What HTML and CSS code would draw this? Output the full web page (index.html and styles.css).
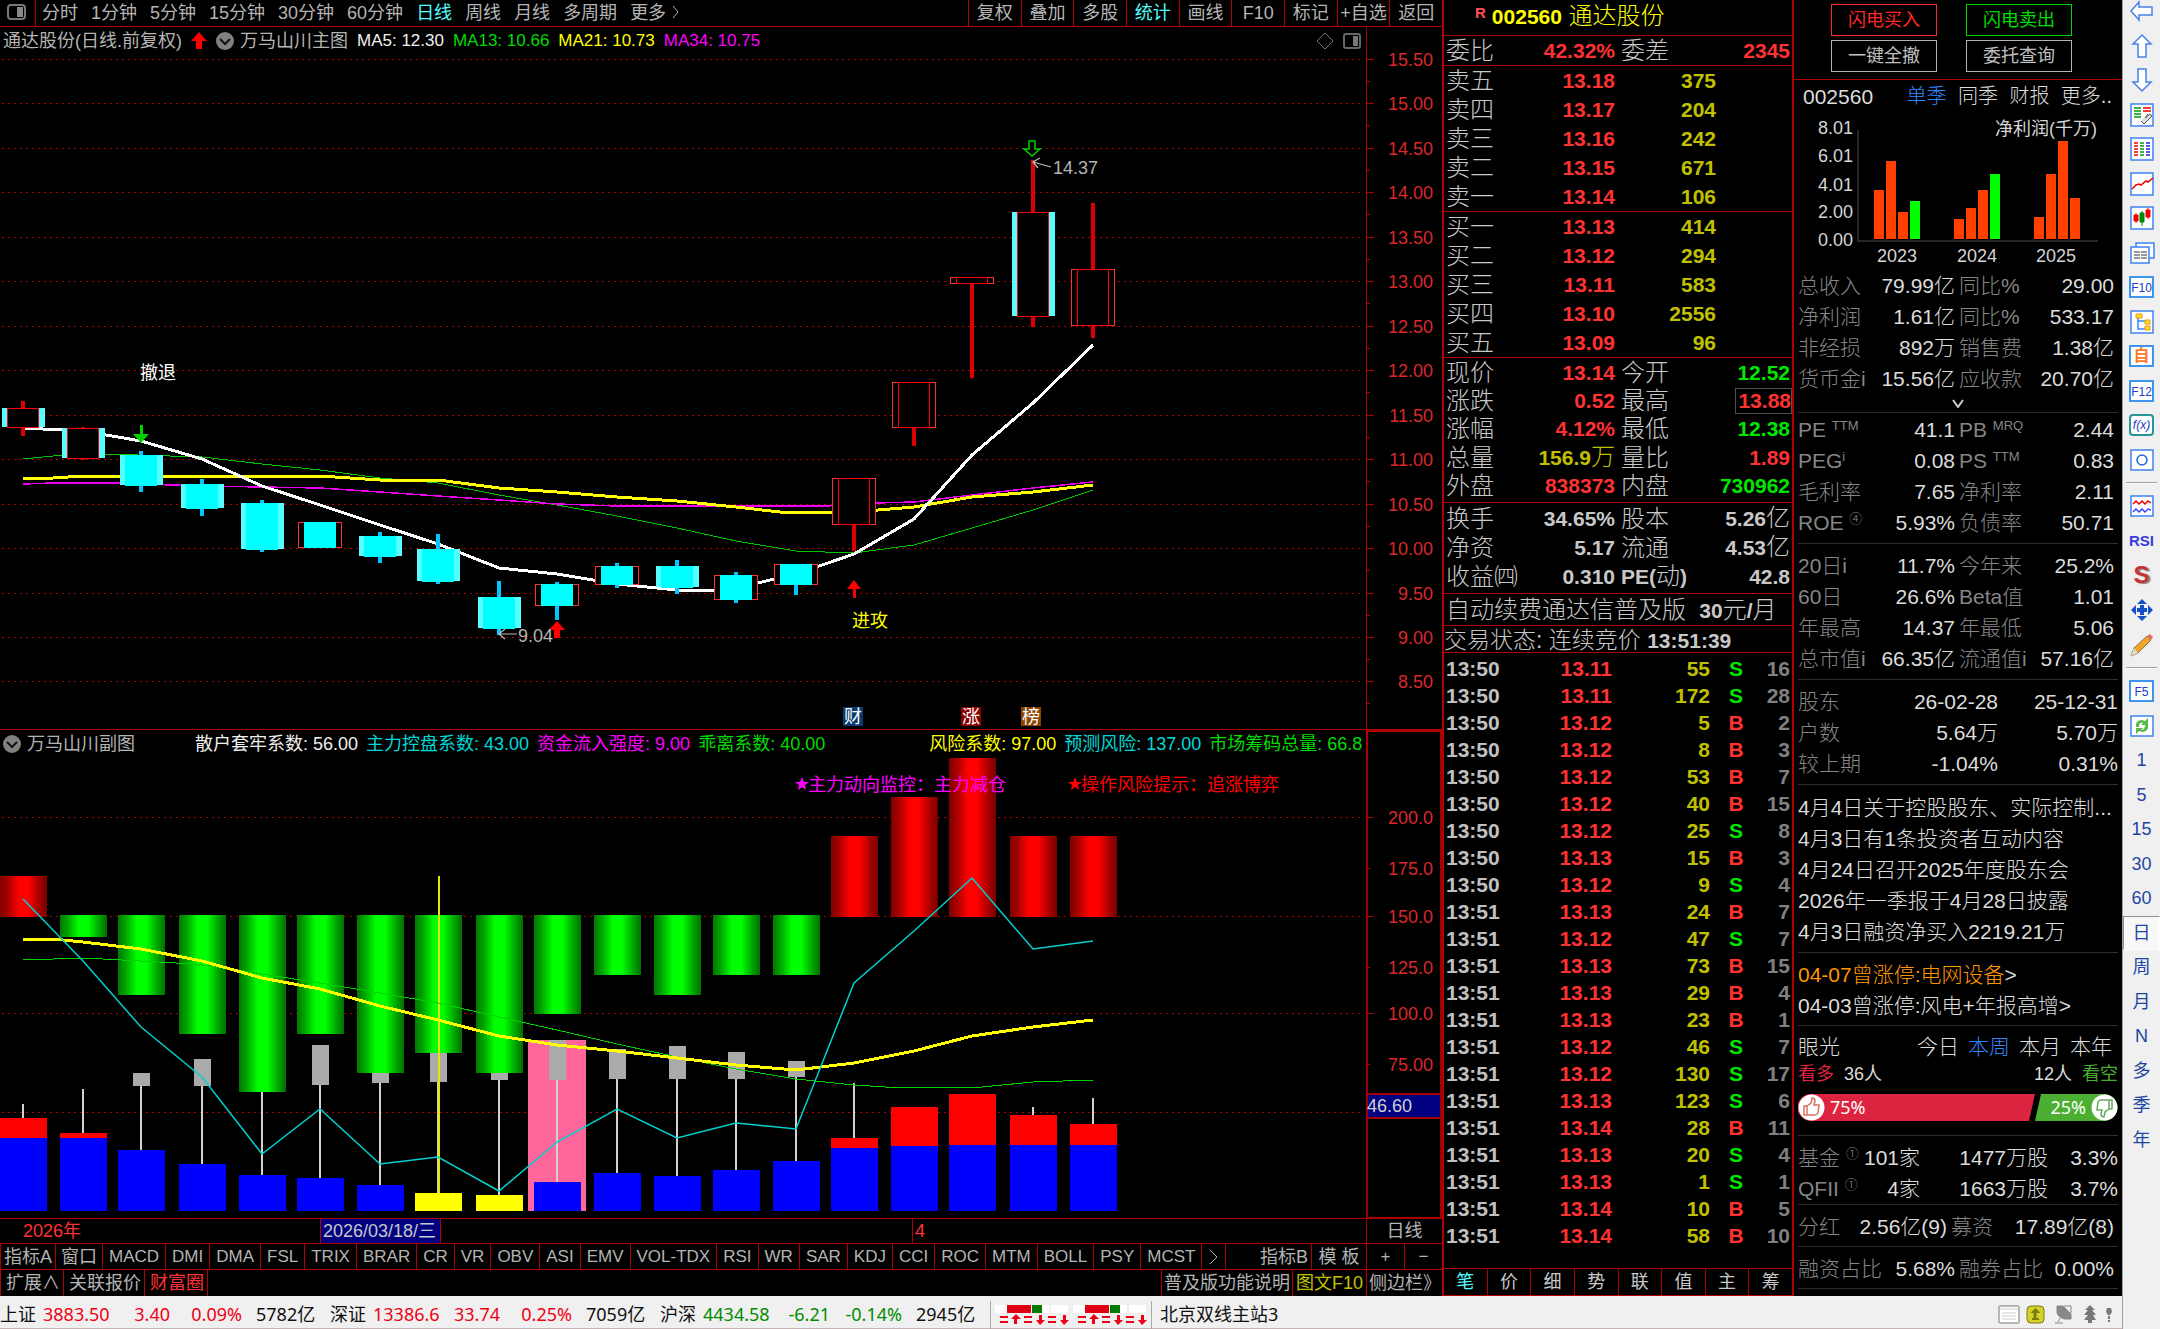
FILE: index.html
```html
<!DOCTYPE html>
<html lang="zh-CN">
<head>
<meta charset="utf-8">
<title>通达股份 002560 日线</title>
<link rel="stylesheet" href="styles.css">
</head>
<body>
<div class="app">
<div class="workspace">
<main class="charts">
  <nav class="topbar">
    <button class="layout-btn" aria-label="布局"><svg width="20" height="16" viewBox="0 0 20 16"><rect x="1" y="1" width="17" height="14" rx="3" fill="none" stroke="#777" stroke-width="2"/><rect x="10" y="3" width="6" height="10" fill="#888"/></svg></button>
    <div class="periods">
      <button>分时</button><button>1分钟</button><button>5分钟</button><button>15分钟</button><button>30分钟</button><button>60分钟</button><button class="cyan">日线</button><button>周线</button><button>月线</button><button>多周期</button><button>更多
      <svg width="7" height="14" viewBox="0 0 7 14"><path d="M1 1l5 6-5 6" fill="none" stroke="#b4b4b4"/></svg></button>
    </div>
    <div class="actions">
      <button>复权</button><button>叠加</button><button>多股</button><button class="cyan">统计</button><button>画线</button><button>F10</button><button>标记</button><button>+自选</button><button>返回</button>
    </div>
  </nav>

  <div class="chart-head">
    <div class="legend">
      <span class="gray">通达股份(日线.前复权)</span>
      <svg class="arrow-ico" width="16" height="18" viewBox="0 0 16 18"><path d="M8 0l8 9h-5v8H5V9H0z" fill="#f00"/></svg>
      <svg class="circle-ico" width="18" height="18" viewBox="0 0 18 18"><circle cx="9" cy="9" r="9" fill="#808080"/><path d="M4 7l5 5 5-5" fill="none" stroke="#111" stroke-width="2"/></svg>
      <span class="gray name">万马山川主图</span>
      <span class="ma white">MA5: 12.30</span><span class="ma green">MA13: 10.66</span><span class="ma yellow">MA21: 10.73</span><span class="ma magenta">MA34: 10.75</span>
      <svg class="head-tools" width="46" height="18" viewBox="0 0 46 18"><path d="M9 1l8 8-8 8-8-8z" fill="none" stroke="#777"/><rect x="28" y="2" width="16" height="14" rx="2" fill="none" stroke="#666" stroke-width="2"/><rect x="37" y="4" width="5" height="10" fill="#777"/></svg>
    </div>
    <div class="axis-head"></div>
  </div>
  <svg class="plot" id="price" viewBox="0 55 1442 674" role="img" aria-label="日线">
    <g id="price-grid"></g>
    <g fill="none" shape-rendering="crispEdges">
      <polyline stroke="#00c800" points="23,459 53,456 83,455 105,454 202,457 262,464 320,470 380,478 438,483 499,495 557,505 617,516 677,528 736,541 796,551 854,553 914,545 972,528 1033,510 1093,490"/>
      <polyline stroke="#e0e" stroke-width="1.5" points="23,484 53,483 112,483 202,486 262,487 320,488 380,492 438,496 499,500 557,504 617,506 720,506 826,506 876,503 914,502 972,495 1033,488 1093,482"/>
      <polyline stroke="#ff0" stroke-width="3" points="23,479 53,478 83,476 320,476 380,480 438,480 499,488 557,492 617,497 677,501 736,507 780,512 854,512 914,507 972,497 1033,492 1093,485"/>
      <polyline stroke="#fff" stroke-width="3" points="23,428 83,431 141,441 202,459 262,486 320,505 380,525 438,544 499,568 557,574 617,584 677,590 720,590 736,588 796,574 854,554 914,519 972,455 1033,403 1093,345"/>
    </g>
    <g id="candles" shape-rendering="crispEdges"></g>
    <path d="M140 425h3v9h6l-8 9-8-9h7z" fill="#00d200"/>
    <path d="M557 621l8 9h-5v8h-6v-8h-5z" fill="#f00"/>
    <path d="M854 580l7 9h-5v9h-3v-9h-6z" fill="#f00"/>
    <path d="M1029 141h6v8h5l-8 7-8-7h5z" fill="none" stroke="#00d200" stroke-width="1.5"/>
    <path d="M499 634h18M505 629l-6 5 6 5M1033 162l18 5M1040 158l-7 4 5 6" fill="none" stroke="#bbb" stroke-width="1.2"/>
    <g class="notes">
      <text x="140" y="379" fill="#fff">撤退</text>
      <text x="518" y="642" fill="#b4b4b4">9.04</text>
      <text x="1053" y="174" fill="#b4b4b4">14.37</text>
      <text x="852" y="627" fill="#ff0">进攻</text>
    </g>
    <rect x="843" y="707" width="20" height="19" fill="#0a3a70"/><rect x="961" y="707" width="20" height="19" fill="#8b0000"/><rect x="1021" y="707" width="20" height="19" fill="#8b4500"/>
    <g class="notes" fill="#fff"><text x="844" y="723">财</text><text x="962" y="723">涨</text><text x="1022" y="723">榜</text></g>
    <g id="price-axis" class="axis"></g>
  </svg>

  <div class="chart-head sub">
    <div class="legend">
      <svg class="circle-ico" width="18" height="18" viewBox="0 0 18 18"><circle cx="9" cy="9" r="9" fill="#808080"/><path d="M4 7l5 5 5-5" fill="none" stroke="#111" stroke-width="2"/></svg>
      <span class="gray name">万马山川副图</span>
      <span class="first white">散户套牢系数: 56.00</span><span class="aqua">主力控盘系数: 43.00</span><span class="magenta">资金流入强度: 9.00</span><span class="green">乖离系数: 40.00</span><span class="risk yellow">风险系数: 97.00</span><span class="aqua">预测风险: 137.00</span><span class="green">市场筹码总量: 66.8</span>
    </div>
    <div class="axis-head"></div>
  </div>
  <svg class="plot" id="factor" viewBox="0 757 1442 461" role="img" aria-label="万马山川副图">
    <defs>
      <linearGradient id="red-bar"><stop offset="0" stop-color="#800000"/><stop offset=".15" stop-color="#a00000"/><stop offset=".4" stop-color="#f00"/><stop offset=".6" stop-color="#f00"/><stop offset=".85" stop-color="#a00000"/><stop offset="1" stop-color="#780000"/></linearGradient>
      <linearGradient id="green-bar"><stop offset="0" stop-color="#007800"/><stop offset=".15" stop-color="#00a000"/><stop offset=".4" stop-color="#0f0"/><stop offset=".6" stop-color="#0f0"/><stop offset=".85" stop-color="#00a000"/><stop offset="1" stop-color="#007000"/></linearGradient>
    </defs>
    <g id="factor-grid"></g>
    <rect x="528" y="1040" width="58" height="171" fill="#f69"/>
    <g id="factor-bars" shape-rendering="crispEdges"></g>
    <rect x="438" y="876" width="2" height="317" fill="#e6e600"/>
    <g fill="none" shape-rendering="crispEdges">
      <polyline stroke="#00d200" points="23,960 53,959 83,958 141,961 193,964 220,967 262,974 320,983 380,993 438,1003 499,1017 557,1030 617,1044 677,1057 736,1069 796,1079 854,1085 885,1087 982,1087 1033,1082 1093,1080"/>
      <polyline stroke="#ff0" stroke-width="3" points="23,939 53,939 83,942 141,949 202,961 262,978 320,989 380,1006 438,1020 499,1036 557,1045 617,1051 677,1058 736,1065 796,1070 854,1063 914,1051 972,1036 1033,1027 1093,1020"/>
    </g>
    <polyline fill="none" stroke="#00d0d0" stroke-width="1.5" points="23,899 83,961 141,1027 202,1077 262,1154 320,1109 380,1164 438,1157 499,1191 557,1142 617,1109 677,1138 736,1123 796,1129 854,983 914,931 972,878 1033,949 1093,941"/>
    <path d="M802 777l2 5h5l-4 3 1 5-4-3-4 3 1-5-4-3h5z" fill="#f0f"/>
    <path d="M1075 777l2 5h5l-4 3 1 5-4-3-4 3 1-5-4-3h5z" fill="#f00"/>
    <g class="notes"><text x="808" y="791" fill="#f0f">主力动向监控：主力减仓</text><text x="1081" y="791" fill="#f00">操作风险提示：追涨博弈</text></g>
    <g id="factor-axis" class="axis"></g>
    <rect x="1368" y="1094" width="74" height="24" fill="#000080"/>
    <path d="M1367 757v461h75M1441 757v461M1368 1094h74M1368 1118h74" fill="none" stroke="#a00000" stroke-width="2"/>
    <text class="tag" x="1367" y="1112">46.60</text>
  </svg>

  <div class="daterow">
    <span class="year">2026年</span><span class="date">2026/03/18/三</span><span class="month">4</span><button class="kind">日线</button>
  </div>
  <div class="row indicators">
    <button class="cjk">指标A</button><button class="cjk win">窗口</button><button>MACD</button><button>DMI</button><button>DMA</button><button>FSL</button><button>TRIX</button><button>BRAR</button><button>CR</button><button>VR</button><button>OBV</button><button>ASI</button><button>EMV</button><button>VOL-TDX</button><button>RSI</button><button>WR</button><button>SAR</button><button>KDJ</button><button>CCI</button><button>ROC</button><button>MTM</button><button>BOLL</button><button>PSY</button><button>MCST</button><button class="more" aria-label="更多指标"><svg width="9" height="16" viewBox="0 0 9 16"><path d="M1 1l7 7-7 7" fill="none" stroke="#b4b4b4"/></svg></button>
    <button class="cjk push">指标B</button><button class="cjk tpl">模 板</button><button class="pm">+</button><button class="pm last">−</button>
  </div>
  <div class="row extras">
    <button>扩展∧</button><button>关联报价</button><button class="red">财富圈</button>
    <button class="push help">普及版功能说明</button><button class="olive f10">图文F10</button><button class="side">侧边栏》</button>
  </div>
</main>

<section class="quote">
  <h1><sup>R</sup><b>002560</b> 通达股份</h1>
  <table class="q">
    <colgroup><col class="a"><col class="b"><col class="c"><col></colgroup>
    <tbody><tr><th>委比</th><td class="up">42.32%</td><th>委差</th><td class="up">2345</td></tr></tbody>
  </table>
  <table class="q book">
    <colgroup><col class="a"><col class="b"><col class="v"><col></colgroup>
    <tbody>
    <tr><th>卖五</th><td class="up">13.18</td><td>375</td><td></td></tr>
    <tr><th>卖四</th><td class="up">13.17</td><td>204</td><td></td></tr>
    <tr><th>卖三</th><td class="up">13.16</td><td>242</td><td></td></tr>
    <tr><th>卖二</th><td class="up">13.15</td><td>671</td><td></td></tr>
    <tr><th>卖一</th><td class="up">13.14</td><td>106</td><td></td></tr>
    </tbody>
  </table>
  <table class="q book">
    <colgroup><col class="a"><col class="b"><col class="v"><col></colgroup>
    <tbody>
    <tr><th>买一</th><td class="up">13.13</td><td>414</td><td></td></tr>
    <tr><th>买二</th><td class="up">13.12</td><td>294</td><td></td></tr>
    <tr><th>买三</th><td class="up">13.11</td><td>583</td><td></td></tr>
    <tr><th>买四</th><td class="up">13.10</td><td>2556</td><td></td></tr>
    <tr><th>买五</th><td class="up">13.09</td><td>96</td><td></td></tr>
    </tbody>
  </table>
  <table class="q snug">
    <colgroup><col class="a"><col class="b"><col class="c"><col></colgroup>
    <tbody>
    <tr><th>现价</th><td class="up">13.14</td><th>今开</th><td class="down">12.52</td></tr>
    <tr><th>涨跌</th><td class="up">0.52</td><th>最高</th><td class="up"><span class="boxed">13.88</span></td></tr>
    <tr><th>涨幅</th><td class="up">4.12%</td><th>最低</th><td class="down">12.38</td></tr>
    <tr><th>总量</th><td class="vol">156.9<span>万</span></td><th>量比</th><td class="up">1.89</td></tr>
    <tr><th>外盘</th><td class="up">838373</td><th>内盘</th><td class="down">730962</td></tr>
    </tbody>
  </table>
  <table class="q snug">
    <colgroup><col class="a"><col class="b"><col class="c"><col></colgroup>
    <tbody>
    <tr><th>换手</th><td>34.65%</td><th>股本</th><td>5.26<span>亿</span></td></tr>
    <tr><th>净资</th><td>5.17</td><th>流通</th><td>4.53<span>亿</span></td></tr>
    <tr><th>收益㈣</th><td>0.310</td><th><b>PE(</b>动<b>)</b></th><td>42.8</td></tr>
    </tbody>
  </table>
  <p class="ad">自动续费通达信普及版 &nbsp;<b>30</b>元<b>/</b>月</p>
  <p class="state">交易状态: 连续竞价 <b>13:51:39</b></p>
  <table class="ticks">
    <colgroup><col class="t"><col class="p"><col class="n"><col class="s"><col></colgroup>
    <tbody>
    <tr><td>13:50</td><td>13.11</td><td>55</td><td class="S">S</td><td>16</td></tr>
    <tr><td>13:50</td><td>13.11</td><td>172</td><td class="S">S</td><td>28</td></tr>
    <tr><td>13:50</td><td>13.12</td><td>5</td><td>B</td><td>2</td></tr>
    <tr><td>13:50</td><td>13.12</td><td>8</td><td>B</td><td>3</td></tr>
    <tr><td>13:50</td><td>13.12</td><td>53</td><td>B</td><td>7</td></tr>
    <tr><td>13:50</td><td>13.12</td><td>40</td><td>B</td><td>15</td></tr>
    <tr><td>13:50</td><td>13.12</td><td>25</td><td class="S">S</td><td>8</td></tr>
    <tr><td>13:50</td><td>13.13</td><td>15</td><td>B</td><td>3</td></tr>
    <tr><td>13:50</td><td>13.12</td><td>9</td><td class="S">S</td><td>4</td></tr>
    <tr><td>13:51</td><td>13.13</td><td>24</td><td>B</td><td>7</td></tr>
    <tr><td>13:51</td><td>13.12</td><td>47</td><td class="S">S</td><td>7</td></tr>
    <tr><td>13:51</td><td>13.13</td><td>73</td><td>B</td><td>15</td></tr>
    <tr><td>13:51</td><td>13.13</td><td>29</td><td>B</td><td>4</td></tr>
    <tr><td>13:51</td><td>13.13</td><td>23</td><td>B</td><td>1</td></tr>
    <tr><td>13:51</td><td>13.12</td><td>46</td><td class="S">S</td><td>7</td></tr>
    <tr><td>13:51</td><td>13.12</td><td>130</td><td class="S">S</td><td>17</td></tr>
    <tr><td>13:51</td><td>13.13</td><td>123</td><td class="S">S</td><td>6</td></tr>
    <tr><td>13:51</td><td>13.14</td><td>28</td><td>B</td><td>11</td></tr>
    <tr><td>13:51</td><td>13.13</td><td>20</td><td class="S">S</td><td>4</td></tr>
    <tr><td>13:51</td><td>13.13</td><td>1</td><td class="S">S</td><td>1</td></tr>
    <tr><td>13:51</td><td>13.14</td><td>10</td><td>B</td><td>5</td></tr>
    <tr><td>13:51</td><td>13.14</td><td>58</td><td>B</td><td>10</td></tr>
    </tbody>
  </table>
  <nav class="qtabs"><button class="cyan">笔</button><button>价</button><button>细</button><button>势</button><button>联</button><button>值</button><button>主</button><button>筹</button></nav>
</section>

<aside class="info">
  <div class="trade"><button class="buy">闪电买入</button><button class="sell">闪电卖出</button><button>一键全撤</button><button>委托查询</button></div>
  <div class="body">
    <div class="fin-tabs"><span class="code">002560</span><button class="blue">单季</button><button>同季</button><button>财报</button><button>更多..</button></div>
    <svg class="profit" viewBox="1798 112 320 158" role="img" aria-label="净利润(千万)">
      <path d="M1858 130v111h240" fill="none" stroke="#333" stroke-width="1.5"/>
      <g fill="#ff4000"><rect x="1874" y="190" width="10" height="49"/><rect x="1886" y="161" width="10" height="78"/><rect x="1898" y="212" width="10" height="27"/><rect x="1954" y="219" width="10" height="20"/><rect x="1966" y="208" width="10" height="31"/><rect x="1978" y="190" width="10" height="49"/><rect x="2034" y="217" width="10" height="22"/><rect x="2046" y="174" width="10" height="65"/><rect x="2058" y="141" width="10" height="98"/><rect x="2070" y="198" width="10" height="41"/></g>
      <g fill="#0f0"><rect x="1910" y="201" width="10" height="38"/><rect x="1990" y="174" width="10" height="65"/></g>
      <g text-anchor="end"><text x="1853" y="134">8.01</text><text x="1853" y="162">6.01</text><text x="1853" y="191">4.01</text><text x="1853" y="218">2.00</text><text x="1853" y="246">0.00</text><text x="2097" y="135">净利润(千万)</text></g>
      <g text-anchor="middle"><text x="1897" y="262">2023</text><text x="1977" y="262">2024</text><text x="2056" y="262">2025</text></g>
    </svg>
    <table class="d">
      <colgroup><col class="a"><col class="b"><col class="c"><col></colgroup>
      <tbody>
      <tr><th>总收入</th><td>79.99亿</td><th>同比%</th><td>29.00</td></tr>
      <tr><th>净利润</th><td>1.61亿</td><th>同比%</th><td>533.17</td></tr>
      <tr><th>非经损</th><td>892万</td><th>销售费</th><td>1.38亿</td></tr>
      <tr><th>货币金i</th><td>15.56亿</td><th>应收款</th><td>20.70亿</td></tr>
      </tbody>
    </table>
    <button class="expand" aria-label="展开"><svg width="12" height="9" viewBox="0 0 12 9"><path d="M1 1l5 7 5-7" fill="none" stroke="#ccc" stroke-width="2"/></svg></button>
    <div class="grp tight">
    <table class="d">
      <colgroup><col class="a"><col class="b"><col class="c"><col></colgroup>
      <tbody>
      <tr><th>PE <sup>TTM</sup></th><td>41.1</td><th>PB <sup>MRQ</sup></th><td>2.44</td></tr>
      <tr><th>PEG<sup>i</sup></th><td>0.08</td><th>PS <sup>TTM</sup></th><td>0.83</td></tr>
      <tr><th>毛利率</th><td>7.65</td><th>净利率</th><td>2.11</td></tr>
      <tr><th>ROE <sup>④</sup></th><td>5.93%</td><th>负债率</th><td>50.71</td></tr>
      </tbody>
    </table></div>
    <div class="grp">
    <table class="d">
      <colgroup><col class="a"><col class="b"><col class="c"><col></colgroup>
      <tbody>
      <tr><th>20日i</th><td>11.7%</td><th>今年来</th><td>25.2%</td></tr>
      <tr><th>60日</th><td>26.6%</td><th>Beta值</th><td>1.01</td></tr>
      <tr><th>年最高</th><td>14.37</td><th>年最低</th><td>5.06</td></tr>
      <tr><th>总市值i</th><td>66.35亿</td><th>流通值i</th><td>57.16亿</td></tr>
      </tbody>
    </table></div>
    <div class="grp">
    <table class="d holders">
      <colgroup><col class="a"><col class="h"><col></colgroup>
      <tbody>
      <tr><th>股东</th><td>26-02-28</td><td>25-12-31</td></tr>
      <tr><th>户数</th><td>5.64万</td><td>5.70万</td></tr>
      <tr><th>较上期</th><td>-1.04%</td><td>0.31%</td></tr>
      </tbody>
    </table></div>
    <ul class="grp news">
      <li><a href="#">4月4日关于控股股东、实际控制...</a></li>
      <li><a href="#">4月3日有1条投资者互动内容</a></li>
      <li><a href="#">4月24日召开2025年度股东会</a></li>
      <li><a href="#">2026年一季报于4月28日披露</a></li>
      <li><a href="#">4月3日融资净买入2219.21万</a></li>
    </ul>
    <ul class="grp limit">
      <li><a href="#"><span class="orange">04-07曾涨停:电网设备</span>&gt;</a></li>
      <li><a href="#">04-03曾涨停:风电+年报高增&gt;</a></li>
    </ul>
    <div class="grp views">
      <div class="view-tabs"><span>眼光</span><button>今日</button><button class="blue">本周</button><button>本月</button><button>本年</button></div>
      <div class="votes"><span class="bull">看多</span><span>36人</span><span class="r">12人</span><span class="bear">看空</span></div>
      <div class="votebar">
        <svg class="bg" viewBox="0 0 320 27" preserveAspectRatio="none"><path d="M13 0h224l-6 27H13a13 13 0 0 1 0-27z" fill="#dc2440"/><path d="M243 0h63a13 13 0 0 1 0 27h-69z" fill="#4caf32"/></svg>
        <svg width="27" height="27" viewBox="0 0 27 27"><circle cx="13.500" cy="13.500" r="13" fill="#fff"/><path d="M6 12h3v9H6zM9 12l4-3 1-5q3 0 3 3l-1 4h5l-1 8q-1 2-3 2H9" fill="none" stroke="#dc7060" stroke-width="1.500"/></svg>
        <span>75%</span><span class="r">25%</span>
        <svg width="27" height="27" viewBox="0 0 27 27"><circle cx="13.500" cy="13.500" r="13" fill="#fff"/><path d="M21 15h-3V6h3zM18 15l-4 3-1 5q-3 0-3-3l1-4H6l1-8q1-2 3-2h8" fill="none" stroke="#6aa860" stroke-width="1.500"/></svg>
      </div>
    </div>
    <div class="grp funds">
    <table class="d">
      <colgroup><col class="f1"><col class="f2"><col class="f3"><col></colgroup>
      <tbody>
      <tr><th>基金 <sup>①</sup></th><td>101家</td><td>1477万股</td><td>3.3%</td></tr>
      <tr><th>QFII <sup>①</sup></th><td>4家</td><td>1663万股</td><td>3.7%</td></tr>
      </tbody>
    </table></div>
    <div class="grp last">
    <table class="d"><colgroup><col class="g1"><col class="g2"><col class="g1"><col></colgroup>
      <tbody><tr><th>分红</th><td>2.56亿(9)</td><th>募资</th><td>17.89亿(8)</td></tr></tbody></table></div>
    <div class="grp last end">
    <table class="d"><colgroup><col class="m1"><col class="m2"><col class="m1"><col></colgroup>
      <tbody><tr><th>融资占比</th><td>5.68%</td><th>融券占比</th><td>0.00%</td></tr></tbody></table></div>
  </div>
</aside>

<footer class="status">
  <span class="i1">上证</span><span class="r i2">3883.50</span><span class="r i3">3.40</span><span class="r i4">0.09%</span><span class="i5">5782亿</span>
  <span class="i1">深证</span><span class="r i2">13386.6</span><span class="r i3">33.74</span><span class="r i4">0.25%</span><span class="i5">7059亿</span>
  <span class="i1">沪深</span><span class="g i2">4434.58</span><span class="g i3">-6.21</span><span class="g i4">-0.14%</span><span class="i5">2945亿</span>
  <svg class="signal" width="162" height="28" viewBox="0 3 162 28">
    <path d="M.5 0v32M161.500 0v32" stroke="#aaa"/>
    <g id="sig"><rect x="5" y="7" width="73" height="8" fill="#fff"/><rect x="17" y="7" width="24" height="8" fill="#e00014"/><rect x="42" y="7" width="10" height="8" fill="#007a00"/><path d="M60 7v8" stroke="#ddd"/><path d="M10 19h8M10 24h8M34 19h8M34 24h8M58 19h8M58 24h8" stroke="#f00014" stroke-width="2"/><path d="M26 16l5 5h-4v5h-3v-5h-3zM50 27l-4-5h3v-5h3v5h3zM74 27l-4-5h3v-5h3v5h3z" fill="#f00014"/></g>
    <use href="#sig" x="78"/>
  </svg>
  <span>北京双线主站3</span>
  <svg class="tray" width="116" height="24" viewBox="0 0 116 24">
    <rect x="1" y="3" width="20" height="17" rx="1" fill="#fff" stroke="#777"/><path d="M2 6h18M4 10h14M4 13h14M4 16h14" stroke="#ccc"/>
    <rect x="29" y="3" width="17" height="17" rx="4" fill="#d2d228" stroke="#7a7a10"/><path d="M37.500 5l5 5h-4v6h-3v-6h-3z" fill="#7a7a10"/><rect x="34" y="15" width="7" height="2" fill="#7a7a10"/>
    <path d="M59 3h6l8 8v5h-7q-6-2-7-6zM57 20h8M60 19l2-4" fill="#888" stroke="#888"/><path d="M66 3h7v7" fill="none" stroke="#888"/>
    <path d="M92 2l5 5h-3l4 5h-3l3 5h-4v3h-4v-3h-4l4-5h-4l4-5h-3z" fill="#777"/>
    <path d="M109 5h4l1 4-2 3h-2l-2-3zM110 13h2v3h-2zM110 17h2v2h-2z" fill="#777"/>
  </svg>
</footer>
</div>

<nav class="tools">
  <div class="tg">
    <button aria-label="后退"><svg viewBox="0 0 26 26"><path d="M2 13l8-9v5h13v8H10v5z" fill="#fff" stroke="#4a80e8" stroke-width="1.500"/></svg></button>
    <button aria-label="上"><svg viewBox="0 0 26 26"><path d="M13 2l9 9h-5v13H9V11H4z" fill="#fff" stroke="#4a80e8" stroke-width="1.500"/></svg></button>
    <button aria-label="下"><svg viewBox="0 0 26 26"><path d="M13 24l9-9h-5V2H9v13H4z" fill="#fff" stroke="#4a80e8" stroke-width="1.500"/></svg></button>
    <button aria-label="自选编辑"><svg viewBox="0 0 26 26"><rect class="fr" x="2" y="2" width="22" height="22"/><path d="M5 6h7M5 9h7M5 12h7M5 15h7" stroke="#090" stroke-width="1.500"/><path d="M14 6h8M14 9h8" stroke="#e00" stroke-width="1.500"/><path d="M12 19l3 3 8-8-2-2-5 4 3-4" fill="#ddd" stroke="#555"/></svg></button>
    <button aria-label="报价"><svg viewBox="0 0 26 26"><rect class="fr" x="2" y="2" width="22" height="22"/><path d="M5 7h4M5 10h4M5 13h4M5 16h4M5 19h4" stroke="#e00" stroke-width="1.500"/><path d="M11 7h4M11 10h4M11 13h4M11 16h4M11 19h4" stroke="#090" stroke-width="1.500"/><path d="M17 7h4M17 10h4M17 13h4M17 16h4M17 19h4" stroke="#22f" stroke-width="1.500"/></svg></button>
    <button aria-label="分时图"><svg viewBox="0 0 26 26"><rect class="fr" x="2" y="2" width="22" height="22"/><path d="M3 18l4-4 3-1 2 1 5-4 2 1 5-4" fill="none" stroke="#e00" stroke-width="1.500"/></svg></button>
    <button aria-label="K线"><svg viewBox="0 0 26 26"><rect class="fr" x="2" y="2" width="22" height="22"/><path d="M5 10h4v6H5zM7 8v10M17 5h4v7h-4zM19 3v11" fill="#e00" stroke="#e00"/><path d="M11 8h4v9h-4zM13 6v15" fill="#080" stroke="#080"/></svg></button>
    <button aria-label="资料"><svg viewBox="0 0 26 26"><path class="fr" d="M7 3h18v15H7z"/><path class="fr" d="M2 7h18v16H2z"/><path d="M5 12h6M5 15h6M5 18h6M12 12h6M12 15h6M12 18h6" stroke="#777" stroke-width="1.500"/></svg></button>
    <button class="fk"><span>F10</span></button>
    <button aria-label="板块"><svg viewBox="0 0 26 26"><rect class="fr" x="2" y="2" width="22" height="22"/><path d="M9 9v11h8M9 12h8" fill="none" stroke="#38f" stroke-width="1.500"/><path d="M7 5h6v4H7zM16 11h5v4h-5zM16 17h5v4h-5z" fill="#fd3" stroke="#e90"/></svg></button>
    <button class="fk zi"><span>自</span></button>
    <button class="fk"><span>F12</span></button>
    <button class="fk fx"><span>f(x)</span></button>
    <button aria-label="圆"><svg viewBox="0 0 26 26"><rect class="fr" x="2" y="3" width="22" height="20"/><circle cx="13" cy="13" r="5" fill="none" stroke="#26d" stroke-width="1.500"/></svg></button>
  </div>
  <hr>
  <div class="tg t2">
    <button aria-label="指标"><svg viewBox="0 0 26 26"><rect class="fr" x="2" y="3" width="22" height="20"/><path d="M4 11l3-3 3 3 3-3 3 3 3-3 3 2" fill="none" stroke="#e00" stroke-width="1.500"/><path d="M4 19l3-3 3 3 3-3 3 3 3-3 3 1" fill="none" stroke="#34f" stroke-width="1.500"/></svg></button>
    <button class="rsi">RSI</button>
    <button class="ess">S</button>
    <button aria-label="移动"><svg viewBox="0 0 26 26"><path d="M13 2l5 5H8zM13 24l5-5H8zM2 13l5-5v10zM24 13l-5-5v10z" fill="#1450c8"/><path d="M13 8v10M8 13h10" stroke="#1450c8" stroke-width="4"/></svg></button>
    <button aria-label="画线"><svg viewBox="0 0 26 26"><path d="M2 24l3-8L18 4l4 4L9 21z" fill="#f0a428" stroke="#875"/><path d="M2 24l3-8 4 5z" fill="#ddc"/><path d="M18 4l3-2 3 3-2 3z" fill="#e66"/></svg></button>
  </div>
  <hr>
  <div class="tg">
    <button class="fk"><span>F5</span></button>
    <button aria-label="刷新"><svg viewBox="0 0 26 26"><rect class="fr" x="2" y="3" width="22" height="20"/><path d="M7 14q-1-7 6-7l3 1 3-3v7h-7l2-2q-4-1-4 4zM19 12q1 7-6 7l-3-1-3 3v-6h7l-2 2q4 0 4-5z" fill="#5cb850"/></svg></button>
    <button>1</button><button>5</button><button>15</button><button>30</button><button>60</button><button class="on">日</button><button>周</button><button>月</button><button>N</button><button>多</button><button>季</button><button>年</button>
  </div>
</nav>
</div>
<script src="charts.js"></script>
</body>
</html>
```
FILE: styles.css
```css
* { box-sizing: border-box; }
html, body { margin: 0; background: #000; }
body { font: 400 18px/24px "Liberation Sans", "Noto Sans CJK SC", sans-serif; color: #b4b4b4; }
button { font: inherit; color: inherit; background: none; border: 0; padding: 0; margin: 0; white-space: nowrap; }
svg { display: block; }
a { color: inherit; text-decoration: none; }
table { border-collapse: collapse; border-spacing: 0; width: 100%; table-layout: fixed; }
th, td { padding: 0; font-weight: inherit; white-space: nowrap; }
ul { margin: 0; padding: 0; list-style: none; }
p, h1 { margin: 0; }

.app { display: flex; min-height: 100vh; }
.workspace { flex: 1; min-width: 0; display: grid; grid-template-columns: minmax(0, 1fr) 352px 328px; grid-template-rows: 1fr auto; }
.charts { min-width: 0; display: flex; flex-direction: column; overflow: hidden; }

.cyan { color: #54fcfc; }
.aqua { color: #00d8d8; }
.white { color: #f0f0f0; }
.green { color: #00dc00; }
.yellow { color: #ff0; }
.magenta { color: #f0f; }
.red { color: #ff3232; }
.olive { color: #c0c000; }
.blue { color: #3088ff; }
.orange { color: #ff9600; }

.topbar { display: flex; height: 27px; line-height: 22px; border-bottom: 1px solid #b00000; }
.layout-btn { width: 36px; padding: 0 0 2px 7px; border-right: 1px solid #b00000; }
.periods { display: flex; gap: 13px; padding-left: 6px; }
.periods svg { display: inline-block; margin-left: 1px; }
.actions { display: flex; margin-left: auto; width: 474px; }
.actions button { flex: 1 1 0; border-left: 1px solid #b00000; }

.chart-head { display: flex; height: 28px; }
.legend { flex: 1; min-width: 0; display: flex; align-items: center; padding-left: 3px; white-space: nowrap; overflow: hidden; }
.axis-head { width: 76px; border-left: 1px solid #b00000; }
.legend .arrow-ico { margin-left: 9px; }
.legend .circle-ico { margin: 0 6px 0 9px; }
.legend .ma { font-size: 17px; margin-left: 9px; }
.head-tools { margin-left: auto; margin-right: 4px; }
.sub { border-top: 1px solid #b00000; }
.sub .legend .circle-ico { margin-left: 0; }
.sub .legend span { margin-left: 8px; }
.sub .legend .name { margin-left: 0; }
.sub .legend .first { margin-left: 60px; }
.sub .legend .risk { margin-left: 104px; }
.sub .axis-head { border: 2px solid #b00000; border-bottom: 0; }
.plot { width: 100%; height: auto; overflow: visible; }
.plot text { font-size: 18px; }
.axis text { fill: #dc2828; }
.tag { fill: #d0d0d0; }

.daterow { display: flex; height: 25px; line-height: 25px; border-top: 1px solid #b00000; }
.year { color: #ff3232; width: 320px; padding-left: 23px; }
.date { background: #000080; color: #c8c8c8; border: 1px solid #b00000; border-top: 0; border-bottom: 0; padding: 0 4px 0 2px; }
.month { margin-left: auto; width: 454px; border-left: 1px solid #b00000; padding-left: 2px; color: #ff3232; }
.kind { width: 76px; border-left: 1px solid #b00000; }
.row { display: flex; border-top: 1px solid #b00000; line-height: 26px; }
.row button { border-left: 1px solid #b00000; }
.indicators { height: 26px; font-size: 17px; }
.indicators button { padding: 0 6px; }
.indicators .cjk { font-size: 18px; padding: 0 3px; }
.indicators .win { padding: 0 5px; }
.indicators .more { padding: 0 7px; border-right: 1px solid #b00000; }
.row .push { margin-left: auto; border-left: 0; }
.indicators .tpl { width: 55px; }
.indicators .pm { width: 38px; }
.extras { height: 27px; }
.extras button { padding: 0 3px 0 5px; }
.extras .red { border-right: 1px solid #b00000; }
.extras .help { border-left: 1px solid #b00000; padding: 0 2px; }
.extras .f10 { padding: 0 2px; width: 74px; }
.extras .side { width: 76px; padding: 0 2px; text-align: left; overflow: hidden; }

.quote { display: flex; flex-direction: column; border-left: 2px solid #b00000; border-right: 2px solid #b00000; color: #c8c8c8; font-weight: 300; }
.quote b { font-size: 21px; font-weight: 700; }
.quote h1 { height: 35px; line-height: 32px; font-size: 24px; font-weight: 300; color: #ff0; padding-left: 31px; }
.quote h1 sup { font-size: 15px; font-weight: 700; line-height: 12px; color: #ff5050; margin-right: 6px; vertical-align: 6px; }
.q { border-top: 1px solid #b00000; }
.q tr { height: 29px; }
.q th, .q td { padding-top: 1px; line-height: 28px; }
.q th { font-size: 24px; text-align: left; padding-left: 2px; }
.q td { font-size: 21px; font-weight: 700; text-align: right; }
.q td span { font-size: 24px; font-weight: 300; }
.q .a { width: 60px; }
.q .b { width: 111px; }
.q .c { width: 70px; }
.q .v { width: 101px; }
.q td:last-child { padding-right: 2px; }
.q th:nth-child(3) { padding-left: 6px; }
.q.book td:nth-child(3), .q .vol { color: #c0c000; }
.q .up { color: #ff3232; }
.q .down { color: #00e600; }
.snug { margin-bottom: 3px; }
.snug tr { height: 28px; }
.snug th, .snug td { line-height: 27px; }
.q td .boxed { display: block; width: 57px; margin: 0 -2px 0 auto; font-size: 21px; font-weight: 700; line-height: 24px; border: 1px solid #505050; }
.ad, .state { border-top: 1px solid #b00000; font-size: 24px; padding-left: 2px; white-space: nowrap; }
.ad { height: 32px; line-height: 31px; }
.state { height: 28px; line-height: 28px; padding-left: 0; border-bottom: 1px solid #b00000; font-size: 23px; }
.ticks { font-size: 21px; font-weight: 700; line-height: 27px; margin-top: 2px; }
.ticks td { color: #808080; text-align: right; }
.ticks td:first-child { color: #c0c0c0; text-align: left; padding-left: 2px; }
.ticks td:nth-child(2) { color: #ff3232; }
.ticks td:nth-child(3) { color: #c0c000; }
.ticks td:nth-child(4) { color: #ff3232; text-align: center; }
.ticks td:nth-child(4).S { color: #00e600; }
.ticks td:last-child { padding-right: 2px; }
.ticks .t { width: 70px; }
.ticks .p { width: 98px; }
.ticks .n { width: 98px; }
.ticks .s { width: 52px; }
.qtabs { display: flex; height: 28px; line-height: 26px; margin-top: auto; border-top: 1px solid #b00000; border-bottom: 1px solid #b00000; font-weight: 400; }
.qtabs button { flex: 1; border-left: 1px solid #b00000; }
.qtabs button:first-child { border-left: 0; }

.info { color: #dcdcdc; font-size: 21px; line-height: 31px; min-width: 0; font-weight: 300; }
.trade { display: grid; grid-template-columns: 106px 106px; column-gap: 29px; row-gap: 4px; padding: 4px 0 7px 37px; border-bottom: 1px solid #b00000; font-size: 18px; font-weight: 400; }
.trade button { height: 32px; border: 1px solid #b4b4b4; color: #c0c0c0; }
.trade .buy { color: #ff2828; border-color: #ff2828; }
.trade .sell { color: #00dc00; border-color: #00dc00; }
.body { padding: 0 4px; }
.fin-tabs { display: flex; justify-content: space-between; padding: 1px 6px 0 5px; font-size: 20px; }
.fin-tabs .code { font-size: 21px; margin-right: 22px; }
.profit { width: 100%; height: auto; }
.profit text { font-size: 18px; fill: #d4d4d4; font-weight: 400; }
.d th { color: #868686; text-align: left; }
.d td { text-align: right; }
.d tr { height: 31px; }
.d sup { font-size: 13px; line-height: 12px; vertical-align: 7px; }
.d th:nth-child(3) { padding-left: 4px; }
.d td:nth-child(4) { padding-right: 4px; }
.d .a { width: 68px; }
.d .b { width: 89px; }
.d .c { width: 80px; }
.d .h { width: 132px; }
.funds .f1 { width: 60px; }
.funds .f2 { width: 62px; }
.funds .f3 { width: 128px; }
.d .g1 { width: 50px; }
.d .g2 { width: 99px; }
.d .m1 { width: 90px; }
.d .m2 { width: 67px; }
.expand { display: flex; justify-content: center; align-items: center; width: 100%; height: 18px; }
.grp { border-top: 1px solid #2c2c2c; padding: 6px 0 5px; }
.tight { padding-top: 1px; }
.news { padding-top: 7px; white-space: nowrap; overflow: hidden; }
.limit { padding-bottom: 4px; }
.views { padding: 5px 0 14px; }
.view-tabs { display: flex; gap: 9px; padding-right: 6px; }
.view-tabs span { margin-right: auto; }
.votes { display: flex; gap: 10px; font-size: 18px; font-weight: 400; line-height: 24px; margin-bottom: 8px; }
.r { margin-left: auto; }
.bull { color: #dc2440; }
.bear { color: #4caf32; }
.votebar { position: relative; display: flex; align-items: center; gap: 5px; height: 27px; color: #fff; font: 18px/27px "Noto Sans", sans-serif; }
.votebar > * { position: relative; }
.votebar .bg { position: absolute; inset: 0; width: 100%; height: 100%; }
.funds { padding: 6px 0 0; }
.funds td:nth-child(4), .holders td { padding-right: 0; }
.last { padding-bottom: 4px; }
.end { border-bottom: 1px solid #2c2c2c; }

.status { grid-column: 1 / -1; display: flex; align-items: center; height: 33px; padding-top: 5px; background: #f0f0f0; border-bottom: 1px solid #c8b4b4; color: #101010; font: 18px/27px "Noto Sans", "Noto Sans CJK SC", sans-serif; white-space: nowrap; }
.status .r { color: #f00014; margin-left: 0; }
.status .g { color: #008c00; }
.i1 { width: 43px; }
.i2 { width: 66px; }
.i3 { width: 61px; text-align: right; }
.i4 { width: 72px; text-align: right; }
.i5 { width: 88px; padding-left: 14px; }
.signal { margin-right: 8px; }
.tray { margin-left: auto; margin-right: 8px; }

.tools { width: 38px; background: #f0f0f0; border-left: 1px solid #a0a0a0; color: #1e46a0; font-size: 18px; font-weight: 400; overflow: hidden; }
.tg { display: grid; grid-auto-rows: 1fr; height: 483px; }
.tg:first-child { margin-top: -6px; }
.t2 { height: 173px; }
.tg button { display: flex; align-items: center; justify-content: center; }
.tg svg { width: 26px; height: 26px; }
.tools hr { height: 2px; margin: 5px 3px; border: 0; border-top: 1px solid #a0a0a0; border-bottom: 1px solid #fff; }
.fr { fill: #fff; stroke: #3c82f0; stroke-width: 1.5px; }
.fk span { width: 25px; height: 22px; line-height: 20px; background: #fff; border: 2px solid #3c96f0; font-size: 12px; color: #1e3cc8; }
.fk.zi span { color: #ff7828; font-size: 16px; line-height: 18px; font-weight: 700; }
.fk.fx span { border-color: #289696; border-radius: 4px; font-style: italic; font-size: 12px; line-height: 18px; }
.rsi { font-size: 15px; font-weight: 700; color: #3c3cdc; }
.ess { font-size: 24px; font-weight: 700; color: #c83232; text-shadow: 2px 1px 1px #888; }
.tg .on { background: #f8f8f8; border: 1px solid #909090; border-right-color: #fff; border-bottom-color: #fff; }
```
FILE: charts.js
```js
const NS = 'http://www.w3.org/2000/svg';
const columns = [23, 83, 141, 202, 262, 320, 380, 438, 499, 557, 617, 677, 736, 796, 854, 914, 972, 1033, 1093];

function add(parent, tag, attrs, text) {
  const node = document.createElementNS(NS, tag);
  for (const key in attrs) node.setAttribute(key, attrs[key]);
  if (text) node.textContent = text;
  document.getElementById(parent).appendChild(node);
}
function box(parent, x, top, width, bottom, fill, stroke) {
  const attrs = { x, y: top, width, height: bottom - top, fill };
  if (stroke) {
    Object.assign(attrs, { x: x + 0.5, y: top + 0.5, width: width - 1, height: bottom - top - 1, stroke });
  }
  add(parent, 'rect', attrs);
}
function gridLine(parent, y) {
  add(parent, 'path', { d: `M2 ${y}.5H1364`, stroke: '#b00000', 'stroke-dasharray': '2 4' });
}
function label(parent, y, text) {
  add(parent, 'text', { x: 1433, y: y + 7, 'text-anchor': 'end' }, text);
}

/* Price axis: 15.50 down to 8.50 in steps of 0.50 */
add('price-axis', 'path', { d: 'M1366.5 55V729', stroke: '#b00000' });
for (let i = 0; i < 15; i++) {
  const y = Math.round(59 + i * 44.46);
  gridLine('price-grid', y);
  label('price-axis', y, (15.5 - i / 2).toFixed(2));
  add('price-axis', 'path', { d: `M1366 ${y}.5h8M1366 ${y + 22}.5h4`, stroke: '#b00000' });
}

/* Outer style, inner style (h hollow red, c cyan), top, bottom, high, low */
[
  ['c', 'h', 408, 428, 401, 436], ['c', 'h', 428, 459, 427, 460], ['c', 'c', 455, 486, 451, 492],
  ['c', 'c', 484, 509, 479, 516], ['c', 'c', 503, 550, 500, 552], ['h', 'c', 522, 548, 522, 548],
  ['c', 'c', 536, 557, 532, 563], ['c', 'c', 549, 582, 534, 584], ['c', 'c', 597, 629, 581, 635],
  ['h', 'c', 584, 606, 582, 620], ['h', 'c', 566, 585, 563, 588], ['c', 'c', 566, 588, 560, 594],
  ['h', 'c', 575, 600, 572, 603], ['h', 'c', 564, 585, 564, 595], ['h', 'h', 478, 525, 478, 551],
  ['h', 'h', 382, 428, 382, 446], ['h', 'h', 277, 284, 277, 378], ['c', 'h', 212, 317, 160, 327],
  ['h', 'h', 269, 326, 203, 338]
].forEach(([outer, inner, top, bottom, high, low], i) => {
  const x = columns[i];
  if (outer === 'c') box('candles', x - 21, top, 43, bottom - 1, '#55ffff');
  else box('candles', x - 22, top, 44, bottom, '#000', '#ff3232');
  box('candles', x - 2, high, 4, low, inner === 'c' ? '#00c8ff' : '#dc0000');
  if (inner === 'c') box('candles', x - 16, top, 32, bottom, '#00ffff');
  else box('candles', x - 16, top, 32, bottom, '#000', '#ff0000');
});

/* Lower panel */
[817, 916, 1013, 1112].forEach(y => gridLine('factor-grid', y));
[[817, '200.0'], [868, '175.0'], [916, '150.0'], [967, '125.0'], [1013, '100.0'], [1064, '75.00']].forEach(([y, text], i) => {
  label('factor-axis', y, text);
  add('factor-axis', 'path', { d: `M1366 ${y}.5h${i % 2 ? 4 : 8}`, stroke: '#b00000' });
});

/* Swing end, stick top, shadow top, shadow bottom, red top, base top */
[
  [876, 1104, 0, 0, 1118, 1138], [937, 1089, 0, 0, 1133, 1138], [995, 1073, 1073, 1086, 0, 1150],
  [1034, 1059, 1059, 1086, 0, 1164], [1092, 1080, 0, 0, 0, 1175], [1034, 1045, 1045, 1085, 0, 1178],
  [1073, 1060, 1060, 1083, 0, 1185], [1053, 1040, 1040, 1082, 0, 1193], [1073, 1060, 1060, 1080, 0, 1195],
  [1014, 1040, 1040, 1080, 0, 1182], [975, 1049, 1049, 1079, 0, 1173], [995, 1046, 1046, 1079, 0, 1176],
  [975, 1052, 1052, 1079, 0, 1170], [975, 1061, 1061, 1077, 0, 1161], [836, 1083, 0, 0, 1138, 1148],
  [797, 0, 0, 0, 1107, 1146], [758, 0, 0, 0, 1094, 1145], [836, 1107, 0, 0, 1115, 1145], [836, 1098, 0, 0, 1124, 1145]
].forEach(([swing, stick, shadowTop, shadowEnd, redTop, base], i) => {
  const x = columns[i];
  const g = 'factor-bars';
  if (stick) box(g, x - 1, stick, 2, base, '#d2d2d2');
  if (shadowTop) box(g, x - 8, shadowTop, 17, shadowEnd, '#aaaaaa');
  if (swing < 916) box(g, x - 23, swing, 47, 917, 'url(#red-bar)');
  else box(g, x - 23, 915, 47, swing, 'url(#green-bar)');
  if (redTop) box(g, x - 23, redTop, 47, base, '#ff0000');
  box(g, x - 23, base, 47, 1211, i === 7 || i === 8 ? '#ffff00' : '#0000ff');
});
```
